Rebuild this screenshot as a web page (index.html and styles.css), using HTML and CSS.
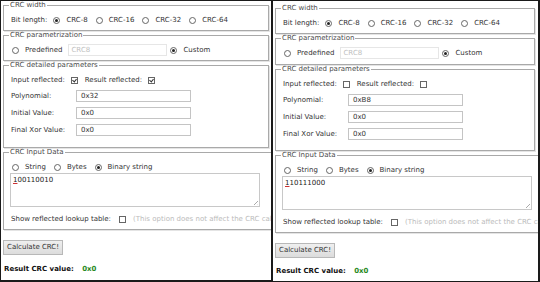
FILE: index.html
```html
<!DOCTYPE html>
<html lang="en">
<head>
    <meta charset="UTF-8">
    <title>CRC Calculator</title>
    <link rel="stylesheet" href="styles.css">
</head>
<body>
    <div class="screen">
        <div class="panel" id="left">
            <fieldset class="box box-width">
                <legend>CRC width</legend>
                <div class="row">
                    <span class="label">Bit length:</span>
                    <span class="radio on"></span><span class="opt">CRC-8</span>
                    <span class="radio"></span><span class="opt">CRC-16</span>
                    <span class="radio"></span><span class="opt">CRC-32</span>
                    <span class="radio"></span><span class="opt">CRC-64</span>
                </div>
            </fieldset>
            <fieldset class="box box-param">
                <legend>CRC parametrization</legend>
                <div class="row">
                    <span class="radio first"></span><span class="opt">Predefined</span>
                    <span class="field off">CRC8</span>
                    <span class="radio on"></span><span class="opt">Custom</span>
                </div>
            </fieldset>
            <fieldset class="box box-detail">
                <legend>CRC detailed parameters</legend>
                <div class="row">
                    <span class="label">Input reflected:</span>
                    <span class="check on"></span>
                    <span class="label">Result reflected:</span>
                    <span class="check on"></span>
                </div>
                <div class="row param">
                    <span class="name">Polynomial:</span>
                    <span class="field">0x32</span>
                </div>
                <div class="row param">
                    <span class="name">Initial Value:</span>
                    <span class="field">0x0</span>
                </div>
                <div class="row param">
                    <span class="name">Final Xor Value:</span>
                    <span class="field">0x0</span>
                </div>
            </fieldset>
            <fieldset class="box box-input">
                <legend>CRC Input Data</legend>
                <div class="row kinds">
                    <span class="radio first"></span><span class="opt">String</span>
                    <span class="radio"></span><span class="opt">Bytes</span>
                    <span class="radio on"></span><span class="opt">Binary string</span>
                </div>
                <div class="data"><span class="typo">1</span>00110010<span class="grip"></span></div>
                <div class="row lookup">
                    <span class="label">Show reflected lookup table:</span>
                    <span class="check"></span>
                    <span class="note">(This option does not affect the CRC calculation)</span>
                </div>
            </fieldset>
            <div class="actions"><span class="btn">Calculate CRC!</span></div>
            <div class="result">Result CRC value: <span class="value">0x0</span></div>
        </div>

        <div class="panel" id="right">
            <fieldset class="box box-width">
                <legend>CRC width</legend>
                <div class="row">
                    <span class="label">Bit length:</span>
                    <span class="radio on"></span><span class="opt">CRC-8</span>
                    <span class="radio"></span><span class="opt">CRC-16</span>
                    <span class="radio"></span><span class="opt">CRC-32</span>
                    <span class="radio"></span><span class="opt">CRC-64</span>
                </div>
            </fieldset>
            <fieldset class="box box-param">
                <legend>CRC parametrization</legend>
                <div class="row">
                    <span class="radio first"></span><span class="opt">Predefined</span>
                    <span class="field off">CRC8</span>
                    <span class="radio on"></span><span class="opt">Custom</span>
                </div>
            </fieldset>
            <fieldset class="box box-detail">
                <legend>CRC detailed parameters</legend>
                <div class="row">
                    <span class="label">Input reflected:</span>
                    <span class="check"></span>
                    <span class="label">Result reflected:</span>
                    <span class="check"></span>
                </div>
                <div class="row param">
                    <span class="name">Polynomial:</span>
                    <span class="field">0xB8</span>
                </div>
                <div class="row param">
                    <span class="name">Initial Value:</span>
                    <span class="field">0x0</span>
                </div>
                <div class="row param">
                    <span class="name">Final Xor Value:</span>
                    <span class="field">0x0</span>
                </div>
            </fieldset>
            <fieldset class="box box-input">
                <legend>CRC Input Data</legend>
                <div class="row kinds">
                    <span class="radio first"></span><span class="opt">String</span>
                    <span class="radio"></span><span class="opt">Bytes</span>
                    <span class="radio on"></span><span class="opt">Binary string</span>
                </div>
                <div class="data"><span class="typo">1</span>10111000<span class="grip"></span></div>
                <div class="row lookup">
                    <span class="label">Show reflected lookup table:</span>
                    <span class="check"></span>
                    <span class="note">(This option does not affect the CRC calculation)</span>
                </div>
            </fieldset>
            <div class="actions"><span class="btn">Calculate CRC!</span></div>
            <div class="result">Result CRC value: <span class="value">0x0</span></div>
        </div>
    </div>
</body>
</html>
```

FILE: styles.css
```css
*
{
  margin: 0;
  padding: 0;
  box-sizing: border-box;
}
body{
  width: 540px;
  height: 282px;
  background: #1a1a1a;
  font-family: "DejaVu Sans", Verdana, sans-serif;
  font-size: 7px;
  color: #333;
  overflow: hidden;
}
.screen{
  display: flex;
  gap: 2px;
  padding: 1px 2px 1px 1px;
  height: 282px;
}
.panel{
  width: 270px;
  height: 279px;
  background: #fff;
  overflow: hidden;
  white-space: nowrap;
}
#right{
  width: 265px;
  height: 280px;
  padding-top: 3px;
}
#right .box{
  margin-right: 3px;
}
#right .box-param{
  padding-bottom: 4px;
}
#right .box-detail{
  padding-bottom: 8px;
}
#right .result{
  padding-top: 9px;
}

/* fieldsets */
.box{
  margin: 0 2px;
  border: 1px solid #a9a9a9;
  box-shadow: inset 1px 1px 0 #fff, 1px 1px 0 #e4e4e4;
  padding: 3px 6px 3px 7px;
}
.box legend{
  margin-left: -2px;
  padding: 0 1px;
  line-height: 9px;
  color: #4a4a4a;
}
.row{
  display: flex;
  align-items: center;
  height: 14px;
}
.row > *{
  flex-shrink: 0;
}
.box-param{
  padding-bottom: 3px;
}
.box-detail{
  padding-bottom: 9px;
}
.box-input{
  padding-bottom: 2px;
}

.label{
  margin-right: 6px;
}
.opt{
  margin: 0 8px 0 6px;
}
.radio{
  width: 7px;
  height: 7px;
  border: 1px solid #666;
  border-radius: 50%;
  position: relative;
}
.radio.first{
  margin-left: 1px;
}
.radio.on::after{
  content: '';
  position: absolute;
  left: 1px;
  top: 1px;
  width: 3px;
  height: 3px;
  border-radius: 50%;
  background: #222;
}
.check{
  width: 7px;
  height: 7px;
  border: 1px solid #666;
  margin-right: 7px;
  position: relative;
}
.check.on::after{
  content: '';
  position: absolute;
  left: 1px;
  top: 0;
  width: 2px;
  height: 3px;
  border: solid #333;
  border-width: 0 1px 1px 0;
  transform: rotate(40deg);
}

/* text fields */
.field{
  display: inline-block;
  width: 115px;
  height: 12px;
  line-height: 10px;
  padding: 0 4px;
  border: 1px solid #c4c4c4;
  color: #333;
}
.field.off{
  width: 99px;
  margin: 0 3px 0 -2px;
  padding: 0 2px;
  border-color: #e6e6e6;
  color: #c0c0c0;
}
.param{
  height: 16px;
  margin-top: 1px;
}
.name{
  width: 65px;
}
.kinds{
  height: 12px;
  margin-top: 1px;
}
.data{
  position: relative;
  height: 34px;
  width: 250px;
  margin-left: -1px;
  border: 1px solid #c8c8c8;
  padding: 2px 2px;
  line-height: 8px;
  color: #222;
}
.typo{
  text-decoration: underline solid #c33;
  text-decoration-thickness: 1px;
  text-underline-offset: 1px;
}
.grip{
  position: absolute;
  right: 1px;
  bottom: 1px;
  width: 4px;
  height: 4px;
  background: linear-gradient(135deg, transparent 45%, #aaa 50%, transparent 60%, transparent 75%, #aaa 80%, transparent 90%);
}
.lookup{
  height: 20px;
  padding-top: 4px;
}
.lookup .label{
  margin-right: 8px;
}
.note{
  color: #bbb;
}

/* button and result */
.actions{
  padding: 10px 0 0 2px;
}
.btn{
  display: inline-block;
  height: 15px;
  line-height: 13px;
  padding: 0 3px;
  border: 1px solid #b8b8b8;
  background: linear-gradient(#efefef, #dcdcdc);
  color: #333;
}
.result{
  padding: 10px 0 0 3px;
  font-weight: bold;
  color: #111;
}
.result .value{
  margin-left: 6px;
  color: #2a8a1e;
}
```
